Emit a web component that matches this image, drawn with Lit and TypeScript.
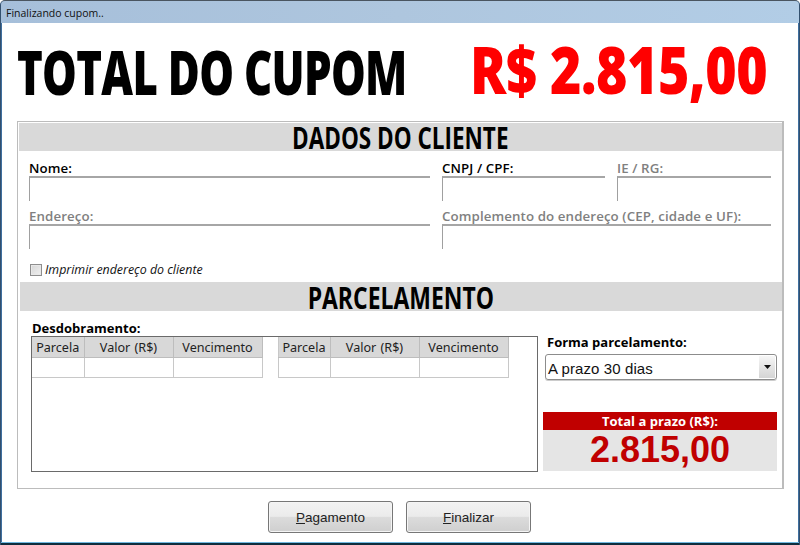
import { LitElement, html, css } from "lit";
import { customElement } from "lit/decorators.js";

@customElement("app-root")
export class AppRoot extends LitElement {
  static styles = css`
    :host { display: block; width: 800px; height: 545px; overflow: hidden; font-family: "Open Sans", "Noto Sans", sans-serif; }
    * { box-sizing: border-box; }
    .win { width: 800px; height: 545px; display: flex; flex-direction: column; background: #3f6f9f; border-top: 1px solid #4a5560; border-left: 1px solid #33506e; border-right: 1px solid #33506e; border-radius: 5px 5px 0 0; overflow: hidden; }
    .title { height: 22px; flex: none; background: linear-gradient(90deg,#a6bfda,#aec6de 50%,#b2cde6); font: 10.5px/24px "Open Sans", sans-serif; color: #111; padding-left: 5px; }
    .body { flex: 1; margin: 0 1px; background: #fff; display: flex; flex-direction: column; padding: 0 15px; }
    .hero { height: 98px; flex: none; display: flex; justify-content: space-between; }
    .slot { display: block; height: 98px; }
    .slot.a { width: 390px; }
    .slot.b { width: 300px; margin-right: 13px; }
    .cond { display: inline-block; white-space: nowrap; font-family: "Open Sans", sans-serif; font-weight: 800; }
    .t1 { font-size: 62px; line-height: 96px; color: #000; transform-origin: left center; transform: scaleX(0.705); letter-spacing: -1px; }
    .t2 { font-size: 65px; line-height: 92px; color: #f00; transform-origin: left center; transform: scaleX(0.825); letter-spacing: -.5px; }
    .panel { height: 368px; flex: none; border: 2px solid #bcbcbc; border-width: 1px 2px 1px 1px; padding: 1px 0 1px 1px; display: flex; flex-direction: column; width: 767px; }
    .band { background: #d9d9d9; display: flex; justify-content: center; flex: none; }
    .band .cond { transform: scaleX(0.75); transform-origin: center; font-weight: 700; font-size: 30px; color: #000; }
    .b1 { height: 28px; margin-bottom: 10px; }
    .b1 .cond { line-height: 30px; height: 28px; }
    .b2 { height: 29px; margin-left: 1px; margin-bottom: 10px; }
    .b2 .cond { line-height: 31px; height: 29px; transform: scaleX(0.765); }
    .fields { display: grid; grid-template-columns: 401px 163px 154px; column-gap: 12px; margin-left: 10px; row-gap: 8px; }
    .f.wide { grid-column: 2 / 4; }
    .lab { font: 600 13.3px/15px "Open Sans", sans-serif; height: 15px; white-space: nowrap; letter-spacing: .1px; }
    .lab.off { color: #808080; }
    .box { height: 25px; border-top: 2px solid #a6a6a6; border-left: 1px solid #a0a0a0; }
    .chk { display: flex; align-items: center; margin: 14px 0 5px 11px; height: 14px; font: italic 12.4px/14px "Open Sans", sans-serif; color: #111; gap: 3px; }
    .cb { width: 12px; height: 12px; border: 1px solid #8e8e8e; background: linear-gradient(135deg,#d6d6d6,#f0f0f0); box-shadow: inset 0 0 0 1px #e8e8e8; }
    .low { flex: 1; display: flex; padding-left: 12px; }
    .left { width: 507px; flex: none; display: flex; flex-direction: column; }
    .gridbox { height: 136px; border: 1px solid #6a6a6a; display: flex; gap: 15px; align-items: flex-start; }
    .lab.d { height: 15px; line-height: 14px; font-weight: 700; font-size: 13px; letter-spacing: 0; padding-left: 1px; }
    table { border-collapse: collapse; table-layout: fixed; width: 230px; font: 12.6px/20px "Noto Sans", sans-serif; word-spacing: 1px; color: #222; }
    th { background: #d8d8d8; font-weight: 400; height: 20px; padding: 2px 0 0; line-height: 17px; border-right: 1px solid #bdbdbd; border-bottom: 1px solid #bdbdbd; }
    td { height: 20px; border-right: 1px solid #c8c8c8; border-bottom: 1px solid #c8c8c8; padding: 0; }
    .t-b td:first-child, .t-b th:first-child { border-left: 1px solid #c8c8c8; }
    .right { margin-left: 5px; width: 234px; flex: none; display: flex; flex-direction: column; margin-top: 14px; }
    .right .lab { margin-left: 4px; font-weight: 700; font-size: 13px; letter-spacing: 0; }
    .sel { margin: 4px 0 0 2px; height: 26px; width: 232px; border: 1px solid #8c8c8c; border-radius: 3px; display: flex; box-shadow: 0 1px 0 #ccc; }
    .sel span { flex: 1; font: 15px/27px "Liberation Sans", sans-serif; padding-left: 2px; color: #111; letter-spacing: .1px; }
    .arrow { width: 16px; margin: 1px; display: flex; align-items: center; justify-content: center; background: linear-gradient(#f6f6f6,#d4d4d4); }
    .tot { margin-top: 32px; height: 59px; display: flex; flex-direction: column; }
    .tot .h { height: 18px; background: #c00000; color: #fff; text-align: center; font: 700 13px/19px "Open Sans", sans-serif; }
    .tot .v { flex: 1; background: #e5e5e5; color: #c00000; text-align: center; font: 700 36px/40px "Liberation Sans", sans-serif; }
    .foot { flex: 1; display: flex; justify-content: center; gap: 13px; padding: 12px 1px 0 0; }
    button { width: 125px; height: 32px; border: 1px solid #777; border-radius: 3px; background: linear-gradient(#f3f3f3 0,#ebebeb 48%,#dcdcdc 50%,#cfcfcf 100%); box-shadow: inset 0 0 0 1px #f5f5f5; font: 13.5px "Liberation Sans", sans-serif; color: #222; padding: 0; }
    u { text-underline-offset: 1px; }
    .edge { height: 3px; flex: none; background: linear-gradient(#6fb7e0 0 1px,#0f2d3d 1px); margin: 0 -1px; }
  `;

  private table(cls: string) {
    return html`<table class=${cls}>
      <colgroup><col style="width:52px" /><col style="width:89px" /><col style="width:89px" /></colgroup>
      <tr><th>Parcela</th><th>Valor (R$)</th><th>Vencimento</th></tr>
      <tr><td></td><td></td><td></td></tr>
    </table>`;
  }

  render() {
    return html`<div class="win">
      <div class="title">Finalizando cupom..</div>
      <div class="body">
        <div class="hero">
          <div class="slot a"><span class="cond t1">TOTAL DO CUPOM</span></div>
          <div class="slot b"><span class="cond t2">R$ 2.815,00</span></div>
        </div>
        <div class="panel">
          <div class="band b1"><span class="cond">DADOS DO CLIENTE</span></div>
          <div class="fields">
            <div class="f"><div class="lab">Nome:</div><div class="box"></div></div>
            <div class="f"><div class="lab">CNPJ / CPF:</div><div class="box"></div></div>
            <div class="f"><div class="lab off">IE / RG:</div><div class="box"></div></div>
            <div class="f"><div class="lab off">Endereço:</div><div class="box"></div></div>
            <div class="f wide"><div class="lab off">Complemento do endereço (CEP, cidade e UF):</div><div class="box"></div></div>
          </div>
          <div class="chk"><div class="cb"></div><span>Imprimir endereço do cliente</span></div>
          <div class="band b2"><span class="cond">PARCELAMENTO</span></div>
          <div class="low">
            <div class="left">
              <div class="lab d">Desdobramento:</div>
              <div class="gridbox">${this.table("t-a")}${this.table("t-b")}</div>
            </div>
            <div class="right">
              <div class="lab">Forma parcelamento:</div>
              <div class="sel"><span>A prazo 30 dias</span><div class="arrow"><svg width="7" height="4" viewBox="0 0 7 4"><path d="M0 0h7L3.5 4z" fill="#111" /></svg></div></div>
              <div class="tot"><div class="h">Total a prazo (R$):</div><div class="v">2.815,00</div></div>
            </div>
          </div>
        </div>
        <div class="foot">
          <button><u>P</u>agamento</button>
          <button><u>F</u>inalizar</button>
        </div>
      </div>
      <div class="edge"></div>
    </div>`;
  }
}
